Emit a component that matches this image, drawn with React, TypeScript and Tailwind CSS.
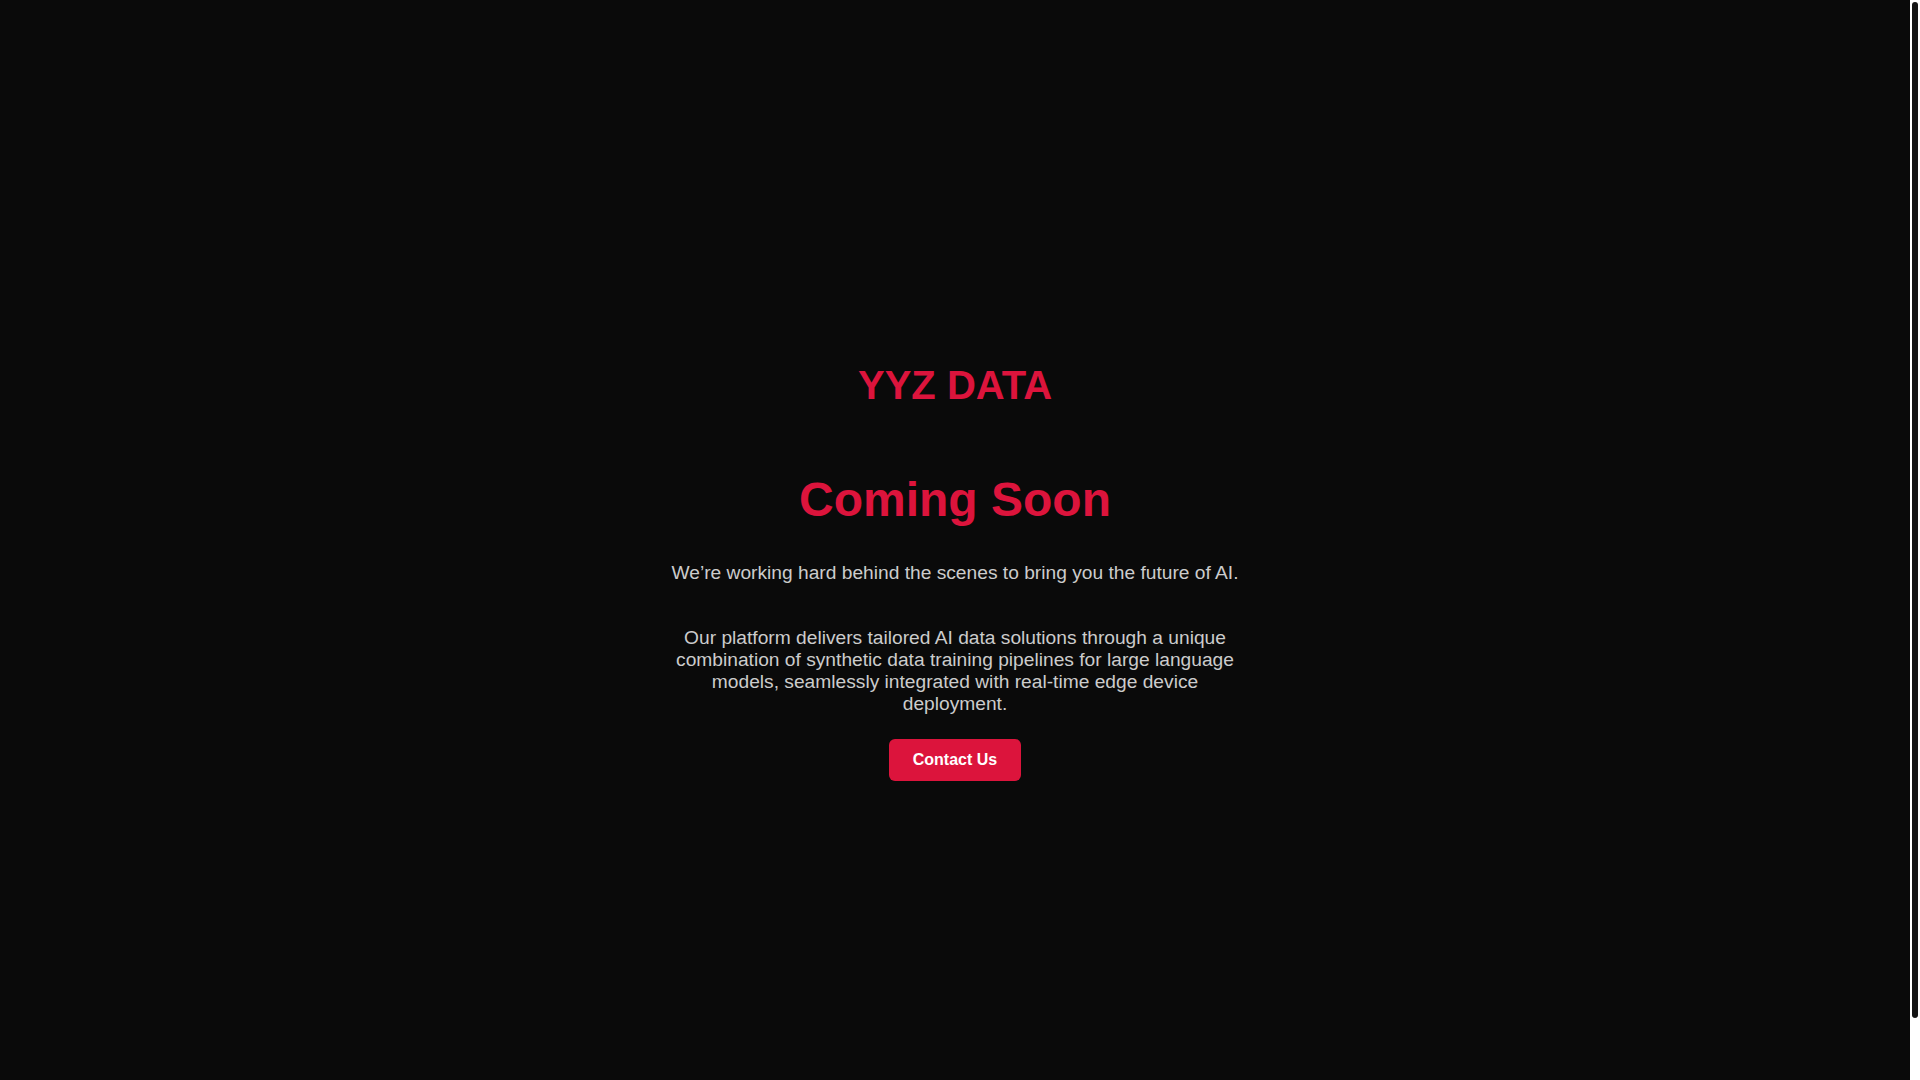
import React from "react";

export default function App() {
  return (
    <div
      className="flex h-screen bg-[#0a0a0a]"
      style={{ fontFamily: '"Liberation Sans", Arial, sans-serif' }}
    >
      <div className="flex-1 h-screen overflow-hidden">
        <div className="box-content min-h-screen py-8 flex flex-col items-center justify-center text-center">
          <h1 className="text-[40px] font-bold leading-[normal] text-[#dc143c] mb-16">
            YYZ DATA
          </h1>
          <h2 className="text-[48px] font-bold leading-[normal] text-[#dc143c] mb-[35px]">
            Coming Soon
          </h2>
          <p className="text-[19.2px] leading-[normal] text-[#cccccc] mb-[43px]">
            We’re working hard behind the scenes to bring you the future of AI.
          </p>
          <p className="max-w-[580px] text-[19.2px] leading-[normal] text-[#cccccc] mb-6">
            Our platform delivers tailored AI data solutions through a unique
            combination of synthetic data training pipelines for large language
            models, seamlessly integrated with real-time edge device deployment.
          </p>
          <a
            href="#"
            className="inline-block rounded-[6px] bg-[#dc143c] px-6 py-3 text-[16px] font-bold leading-[normal] text-white"
          >
            Contact Us
          </a>
        </div>
      </div>
      <div className="w-[10px] shrink-0 h-screen bg-white px-[2px] pt-[2px]">
        <div className="h-[1016px] rounded-[3px] bg-[#141414]" />
      </div>
    </div>
  );
}
